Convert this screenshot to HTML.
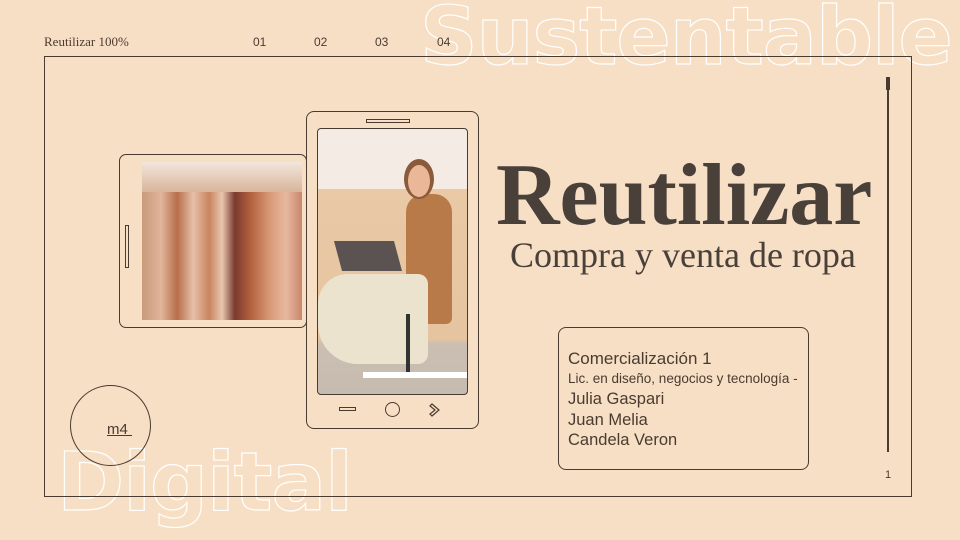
<!DOCTYPE html>
<html><head><meta charset="utf-8"><style>
*{margin:0;padding:0;box-sizing:border-box}
body{width:960px;height:540px;background:#f7dfc5;position:relative;overflow:hidden;font-family:"Liberation Sans",sans-serif;color:#4a3b30}
.a{position:absolute}
.out{position:absolute;font-family:"DejaVu Sans",sans-serif;font-weight:bold;color:transparent;-webkit-text-stroke:1.2px #fff;white-space:nowrap}
.ser{font-family:"Liberation Serif",serif}
</style></head><body>
<div class="out" style="left:420px;top:-10px;font-size:80px;letter-spacing:-1px">Sustentable</div>
<div class="out" style="left:57px;top:436px;font-size:81px;letter-spacing:-1px">Digital</div>
<div class="a ser" style="left:44px;top:34px;font-size:13px">Reutilizar 100%</div>
<div class="a" style="left:253px;top:35px;font-size:12px">01</div>
<div class="a" style="left:314px;top:35px;font-size:12px">02</div>
<div class="a" style="left:375px;top:35px;font-size:12px">03</div>
<div class="a" style="left:437px;top:35px;font-size:12px">04</div>
<div class="a" style="left:44px;top:56px;width:868px;height:441px;border:1.5px solid #4a3b30"></div>
<div class="a" style="left:887px;top:78px;width:2px;height:374px;background:#4a3b30"></div>
<div class="a" style="left:886px;top:77px;width:4px;height:13px;background:#4a3b30"></div>
<div class="a" style="left:885px;top:469px;font-size:11px">1</div>
<!-- left phone -->
<div class="a" style="left:119px;top:154px;width:188px;height:174px;border:1.5px solid #4a3b30;border-radius:7px"></div>
<div class="a" style="left:125px;top:225px;width:4px;height:43px;border:1px solid #4a3b30"></div>
<div class="a" style="left:142px;top:162px;width:160px;height:158px;background:linear-gradient(90deg,#c99a7c 0%,#e0b59a 12%,#b76e4a 22%,#e6c0a8 32%,#c9845e 42%,#e8c7b0 50%,#7a3a2e 58%,#b4623e 68%,#d99a78 80%,#e8b8a0 90%,#c8866a 100%)"></div>
<div class="a" style="left:142px;top:162px;width:160px;height:30px;background:linear-gradient(#f2e6dc,#d8b49a)"></div>
<!-- right phone -->
<div class="a" style="left:306px;top:111px;width:173px;height:318px;border:1.5px solid #4a3b30;border-radius:8px;background:#f7dfc5"></div>
<div class="a" style="left:366px;top:119px;width:44px;height:4px;border:1px solid #4a3b30"></div>
<div class="a" style="left:317px;top:128px;width:151px;height:267px;border:1.5px solid #4a3b30;border-radius:4px;overflow:hidden;background:linear-gradient(#f4ece4 0,#f4ece4 60px,#e9c9a6 60px,#e6c4a0 210px,#cbbfb2 215px,#c6bbb0 100%)">
 <div class="a" style="left:88px;top:65px;width:46px;height:130px;background:#b87a48;border-radius:18px 18px 6px 6px"></div>
 <div class="a" style="left:86px;top:30px;width:30px;height:40px;background:#8a5a3a;border-radius:50%"></div>
 <div class="a" style="left:90px;top:36px;width:22px;height:32px;background:#eab898;border-radius:50%"></div>
 <div class="a" style="left:0px;top:145px;width:110px;height:90px;background:#ece3cf;border-radius:30px 10px 10px 40px"></div>
 <div class="a" style="left:20px;top:112px;width:60px;height:30px;background:#5b5351;transform:skewX(15deg)"></div>
 <div class="a" style="left:88px;top:185px;width:4px;height:60px;background:#333"></div>
 <div class="a" style="left:45px;top:243px;width:105px;height:6px;background:#fff"></div>
</div>
<div class="a" style="left:339px;top:407px;width:17px;height:4px;border:1px solid #4a3b30"></div>
<div class="a" style="left:385px;top:402px;width:15px;height:15px;border:1.5px solid #4a3b30;border-radius:50%"></div>
<svg class="a" style="left:428px;top:402px" width="14" height="16"><path d="M4 2 L11 8 L4 14 L2 12 L7 8 L2 4 Z" fill="none" stroke="#4a3b30" stroke-width="1.2"/></svg>
<div class="a ser" style="left:496px;top:146px;font-size:88px;font-weight:bold;color:#4a403a;line-height:100px;white-space:nowrap">Reutilizar</div>
<div class="a ser" style="left:510px;top:234px;font-size:36px;color:#4a403a;line-height:42px;white-space:nowrap">Compra y venta de ropa</div>
<div class="a" style="left:558px;top:327px;width:251px;height:143px;border:1.5px solid #4a3b30;border-radius:8px"></div>
<div class="a" style="left:568px;top:348px;font-size:17px;line-height:21px">Comercialización 1</div>
<div class="a" style="left:568px;top:371px;font-size:13.5px;white-space:nowrap">Lic. en diseño, negocios y tecnología -</div>
<div class="a" style="left:568px;top:389px;font-size:16.5px;line-height:20.5px">Julia Gaspari<br>Juan Melia<br>Candela Veron</div>
<div class="a" style="left:70px;top:385px;width:81px;height:81px;border:1.5px solid #4a3b30;border-radius:50%"></div>
<div class="a" style="left:107px;top:421px;font-size:15px;text-decoration:underline">m4&nbsp;</div>
</body></html>
